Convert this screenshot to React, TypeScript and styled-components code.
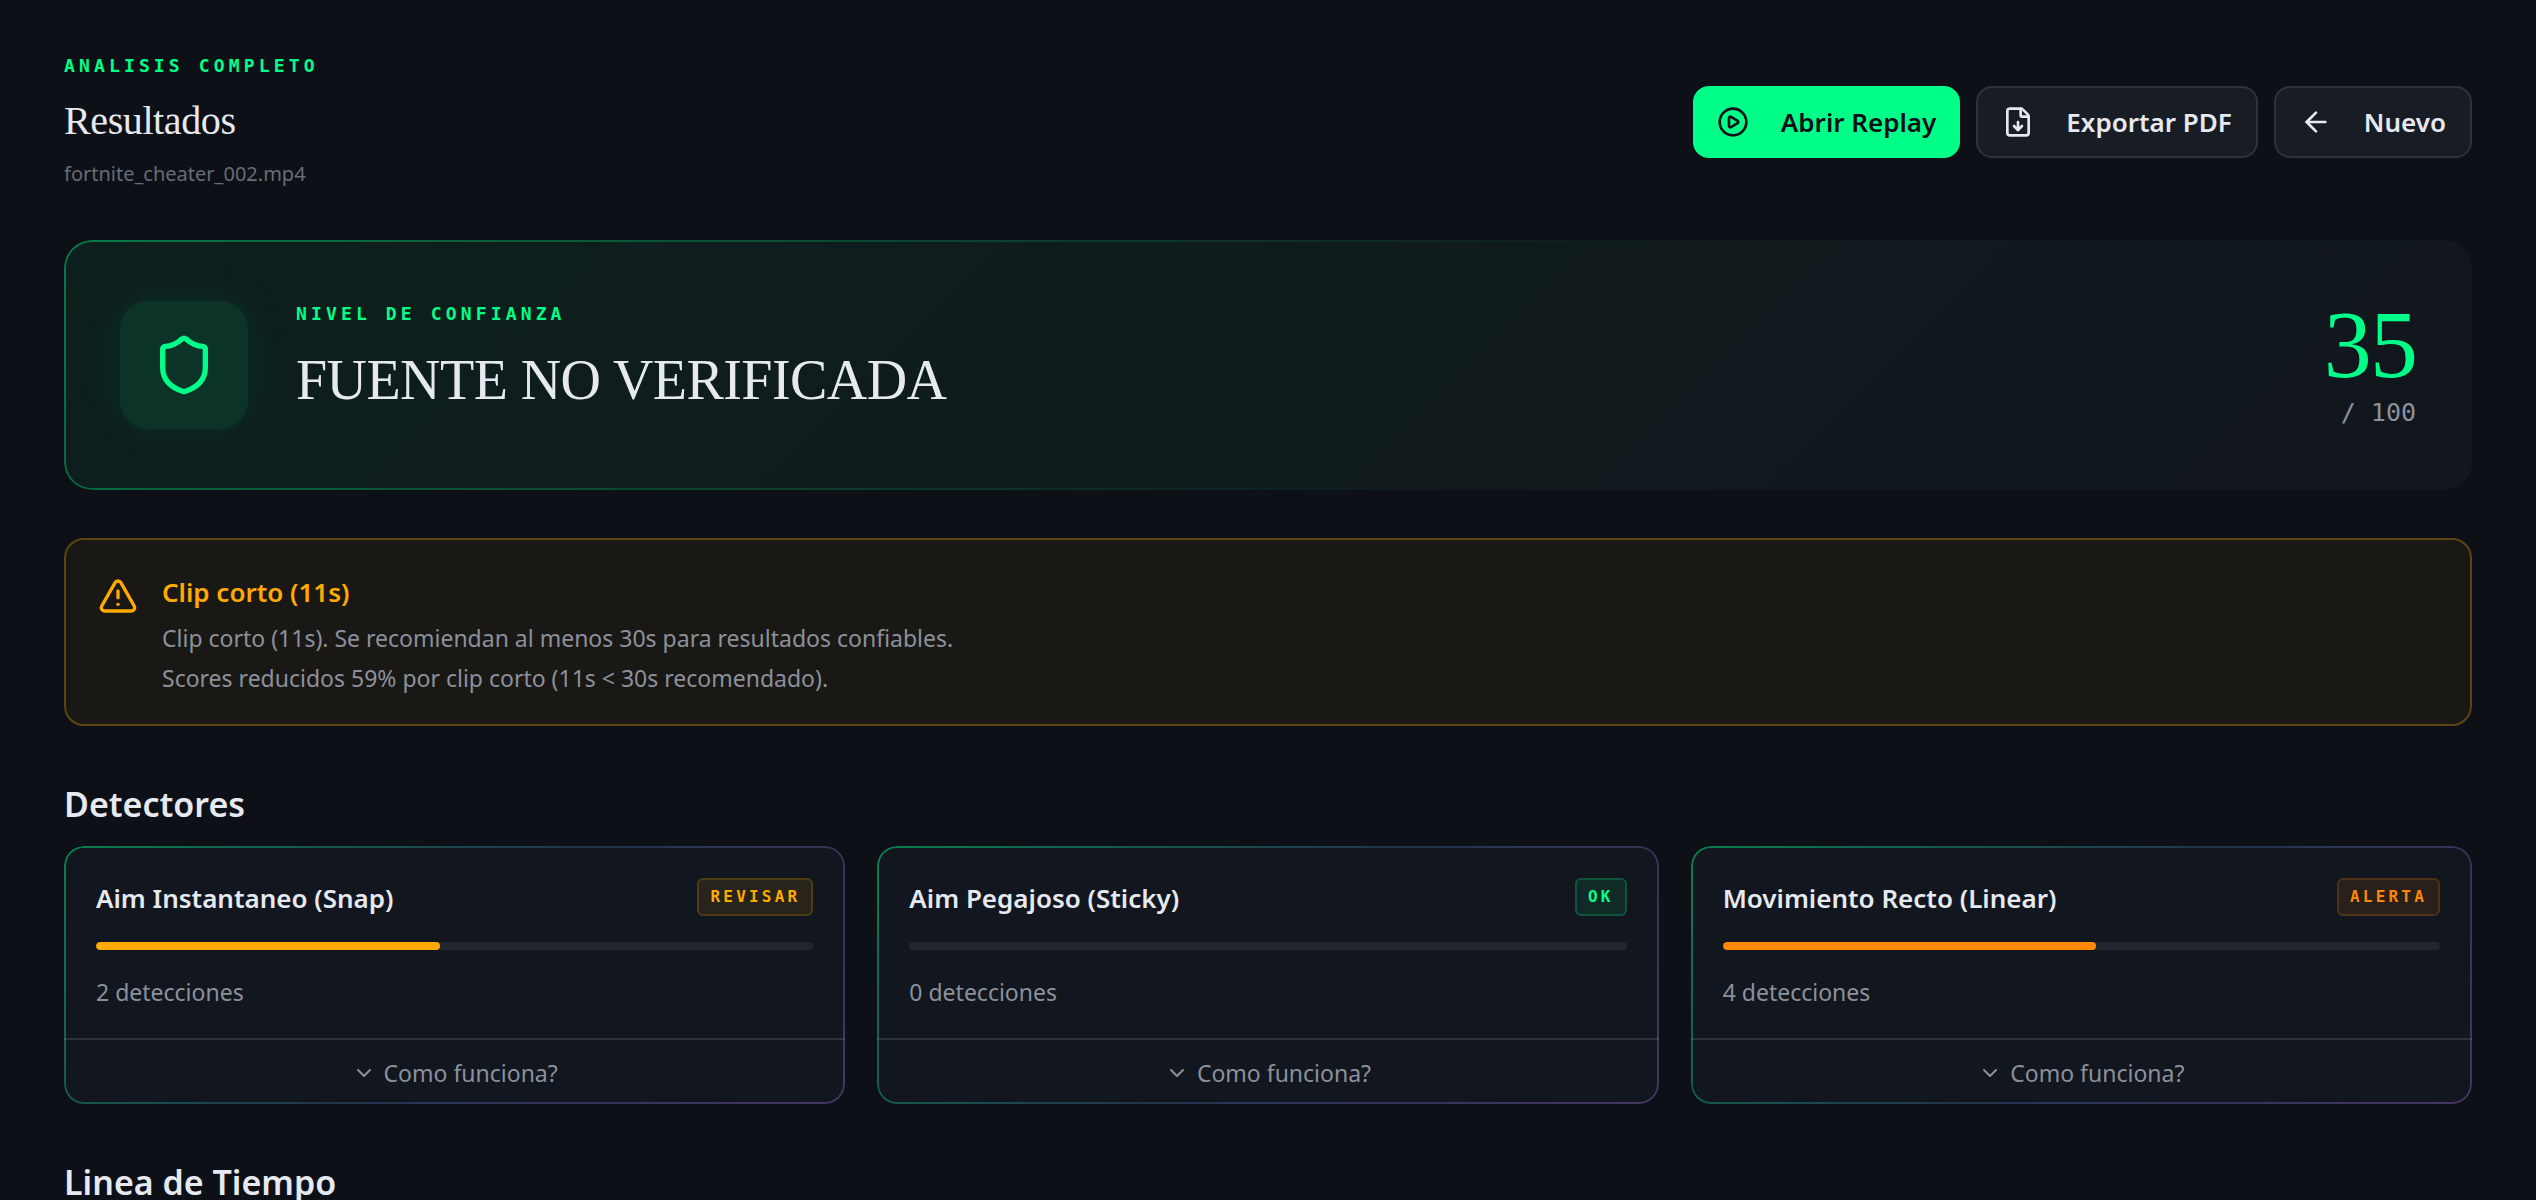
import React from "react";
import styled, { createGlobalStyle } from "styled-components";
import {
  ArrowLeft,
  ChevronDown,
  CirclePlay,
  FileDown,
  Shield,
  TriangleAlert,
} from "lucide-react";

const sans = `"Noto Sans", "Open Sans", sans-serif`;
const serif = `"Liberation Serif", "Times New Roman", serif`;
const mono = `"DejaVu Sans Mono", monospace`;

const color = {
  page: "#0d1017",
  panel: "#12161e",
  raised: "#181c25",
  line: "#2d323b",
  track: "#21252e",
  text: "#e6e9f0",
  muted: "#8b919c",
  faint: "#676c76",
  green: "#00ff88",
  amber: "#ffaa00",
  orange: "#ff8800",
};

const GlobalStyle = createGlobalStyle`
  *, *::before, *::after { box-sizing: border-box; }
  html { background: ${color.page}; }
  body {
    margin: 0;
    background: ${color.page};
    color: ${color.text};
    font-family: ${sans};
    overflow: hidden;
  }
  h1, h2, h3, p { margin: 0; }
  button { font: inherit; color: inherit; cursor: pointer; }
`;

const Page = styled.main`
  padding: 48px 64px 0;
  height: 100vh;
  overflow: hidden;
`;

const Header = styled.header`
  display: flex;
  align-items: center;
  justify-content: space-between;
  margin-bottom: 44px;
`;

const Eyebrow = styled.p`
  color: ${color.green};
  font: 700 18px/36px ${mono};
  letter-spacing: 0.23em;
  text-transform: uppercase;
`;

const PageTitle = styled.h1`
  margin-top: 12px;
  font: 400 40px/50px ${serif};
  letter-spacing: -0.01em;
`;

const FileName = styled.p`
  margin-top: 6px;
  color: ${color.faint};
  font-size: 20px;
  line-height: 44px;
`;

const Actions = styled.div`
  display: flex;
  gap: 16px;
`;

const ActionButton = styled.button<{ $primary?: boolean }>`
  display: flex;
  align-items: center;
  gap: 32px;
  height: 72px;
  padding: 0 24px;
  border: ${(p) => (p.$primary ? "0" : `2px solid ${color.line}`)};
  border-radius: 16px;
  background: ${(p) => (p.$primary ? color.green : color.raised)};
  color: ${(p) => (p.$primary ? color.page : color.text)};
  font-size: 26px;
  font-weight: 600;
`;

const gradientBorder = (gradient: string) => `
  position: relative;
  &::before {
    content: "";
    position: absolute;
    inset: 0;
    padding: 2px;
    border-radius: inherit;
    background: ${gradient};
    mask: linear-gradient(#000 0 0) content-box exclude, linear-gradient(#000 0 0);
    pointer-events: none;
  }
`;

const Hero = styled.section`
  ${gradientBorder("linear-gradient(135deg, rgba(0, 255, 136, 0.4), rgba(0, 255, 136, 0) 60%)")}
  display: flex;
  align-items: center;
  gap: 48px;
  padding: 56px;
  border-radius: 28px;
  background: linear-gradient(135deg, #0d1f1d, #0f1b1c 50%, ${color.panel});
`;

const ShieldTile = styled.div`
  display: grid;
  place-items: center;
  width: 128px;
  height: 128px;
  border-radius: 28px;
  background: #0c3328;
  color: ${color.green};
  box-shadow: 0 0 48px rgba(0, 255, 136, 0.08);
`;

const Verdict = styled.div`
  flex: 1;
  padding-bottom: 22px;
`;

const VerdictTitle = styled.h2`
  margin-top: 16px;
  font: 400 56px/64px ${serif};
  letter-spacing: -0.01em;
`;

const Score = styled.div`
  text-align: right;
`;

const ScoreValue = styled.p`
  color: ${color.green};
  font: 400 96px/90px ${serif};
  letter-spacing: -0.02em;
`;

const ScoreMax = styled.p`
  margin-top: 6px;
  color: ${color.muted};
  font: 400 25px/34px ${mono};
`;

const Notice = styled.section`
  display: flex;
  align-items: flex-start;
  gap: 24px;
  margin-top: 48px;
  padding: 28px 32px 26px;
  border: 2px solid #5c430f;
  border-radius: 20px;
  background: #1a1814;

  svg {
    flex: none;
    margin-top: 8px;
    color: ${color.amber};
  }
`;

const NoticeTitle = styled.h3`
  margin-bottom: 2px;
  color: ${color.amber};
  font-size: 26px;
  font-weight: 600;
  line-height: 48px;
`;

const NoticeText = styled.p`
  color: ${color.muted};
  font-size: 23px;
  line-height: 40px;
`;

const SectionTitle = styled.h2`
  margin: 54px 0 18px;
  font-size: 34px;
  font-weight: 600;
  line-height: 48px;
`;

const CardGrid = styled.div`
  display: grid;
  grid-template-columns: repeat(3, 1fr);
  gap: 32px;
`;

const Card = styled.article`
  ${gradientBorder(
    "linear-gradient(135deg, rgba(0, 255, 136, 0.45), rgba(66, 110, 170, 0.35) 50%, rgba(150, 100, 200, 0.4))"
  )}
  border-radius: 20px;
  background: ${color.panel};
`;

const CardBody = styled.div`
  padding: 32px 32px 26px;
`;

const CardHead = styled.div`
  display: flex;
  align-items: flex-start;
  justify-content: space-between;
`;

const CardTitle = styled.h3`
  font-size: 26px;
  font-weight: 600;
  line-height: 40px;
`;

type Level = "review" | "ok" | "alert";

const levels: Record<Level, { ink: string; fill: string; edge: string }> = {
  review: { ink: color.amber, fill: "#29241b", edge: "#4f3b15" },
  ok: { ink: color.green, fill: "#102b27", edge: "#0e5539" },
  alert: { ink: color.orange, fill: "#29201b", edge: "#4f3215" },
};

const Badge = styled.span<{ $level: Level }>`
  padding: 0 11px;
  border: 2px solid ${(p) => levels[p.$level].edge};
  border-radius: 6px;
  background: ${(p) => levels[p.$level].fill};
  color: ${(p) => levels[p.$level].ink};
  font: 700 16px/34px ${mono};
  letter-spacing: 0.2em;
`;

const Track = styled.div`
  height: 8px;
  margin-top: 24px;
  border-radius: 4px;
  background: ${color.track};
  overflow: hidden;
`;

const Fill = styled.div<{ $level: Level }>`
  height: 100%;
  border-radius: 4px;
  background: ${(p) => levels[p.$level].ink};
`;

const Count = styled.p`
  margin-top: 22px;
  color: ${color.muted};
  font-size: 23px;
  line-height: 40px;
`;

const HowButton = styled.button`
  display: flex;
  align-items: center;
  justify-content: center;
  gap: 8px;
  width: 100%;
  padding: 15px 0 13px;
  border: 0;
  border-top: 2px solid ${color.line};
  background: none;
  color: ${color.muted};
  font-size: 23px;
  line-height: 36px;
`;

const detectors: { name: string; level: Level; label: string; score: number; hits: number }[] = [
  { name: "Aim Instantaneo (Snap)", level: "review", label: "REVISAR", score: 48, hits: 2 },
  { name: "Aim Pegajoso (Sticky)", level: "ok", label: "OK", score: 0, hits: 0 },
  { name: "Movimiento Recto (Linear)", level: "alert", label: "ALERTA", score: 52, hits: 4 },
];

export default function App() {
  return (
    <>
      <GlobalStyle />
      <Page>
        <Header>
          <div>
            <Eyebrow>Analisis completo</Eyebrow>
            <PageTitle>Resultados</PageTitle>
            <FileName>fortnite_cheater_002.mp4</FileName>
          </div>
          <Actions>
            <ActionButton type="button" $primary>
              <CirclePlay size={32} />
              Abrir Replay
            </ActionButton>
            <ActionButton type="button">
              <FileDown size={32} />
              Exportar PDF
            </ActionButton>
            <ActionButton type="button">
              <ArrowLeft size={32} />
              Nuevo
            </ActionButton>
          </Actions>
        </Header>

        <Hero>
          <ShieldTile>
            <Shield size={64} />
          </ShieldTile>
          <Verdict>
            <Eyebrow>Nivel de confianza</Eyebrow>
            <VerdictTitle>FUENTE NO VERIFICADA</VerdictTitle>
          </Verdict>
          <Score>
            <ScoreValue>35</ScoreValue>
            <ScoreMax>/ 100</ScoreMax>
          </Score>
        </Hero>

        <Notice>
          <TriangleAlert size={40} />
          <div>
            <NoticeTitle>Clip corto (11s)</NoticeTitle>
            <NoticeText>
              Clip corto (11s). Se recomiendan al menos 30s para resultados confiables.
            </NoticeText>
            <NoticeText>Scores reducidos 59% por clip corto (11s &lt; 30s recomendado).</NoticeText>
          </div>
        </Notice>

        <SectionTitle>Detectores</SectionTitle>
        <CardGrid>
          {detectors.map((d) => (
            <Card key={d.name}>
              <CardBody>
                <CardHead>
                  <CardTitle>{d.name}</CardTitle>
                  <Badge $level={d.level}>{d.label}</Badge>
                </CardHead>
                <Track>
                  <Fill $level={d.level} style={{ width: `${d.score}%` }} />
                </Track>
                <Count>{d.hits} detecciones</Count>
              </CardBody>
              <HowButton type="button">
                <ChevronDown size={24} />
                Como funciona?
              </HowButton>
            </Card>
          ))}
        </CardGrid>

        <SectionTitle>Linea de Tiempo</SectionTitle>
      </Page>
    </>
  );
}
